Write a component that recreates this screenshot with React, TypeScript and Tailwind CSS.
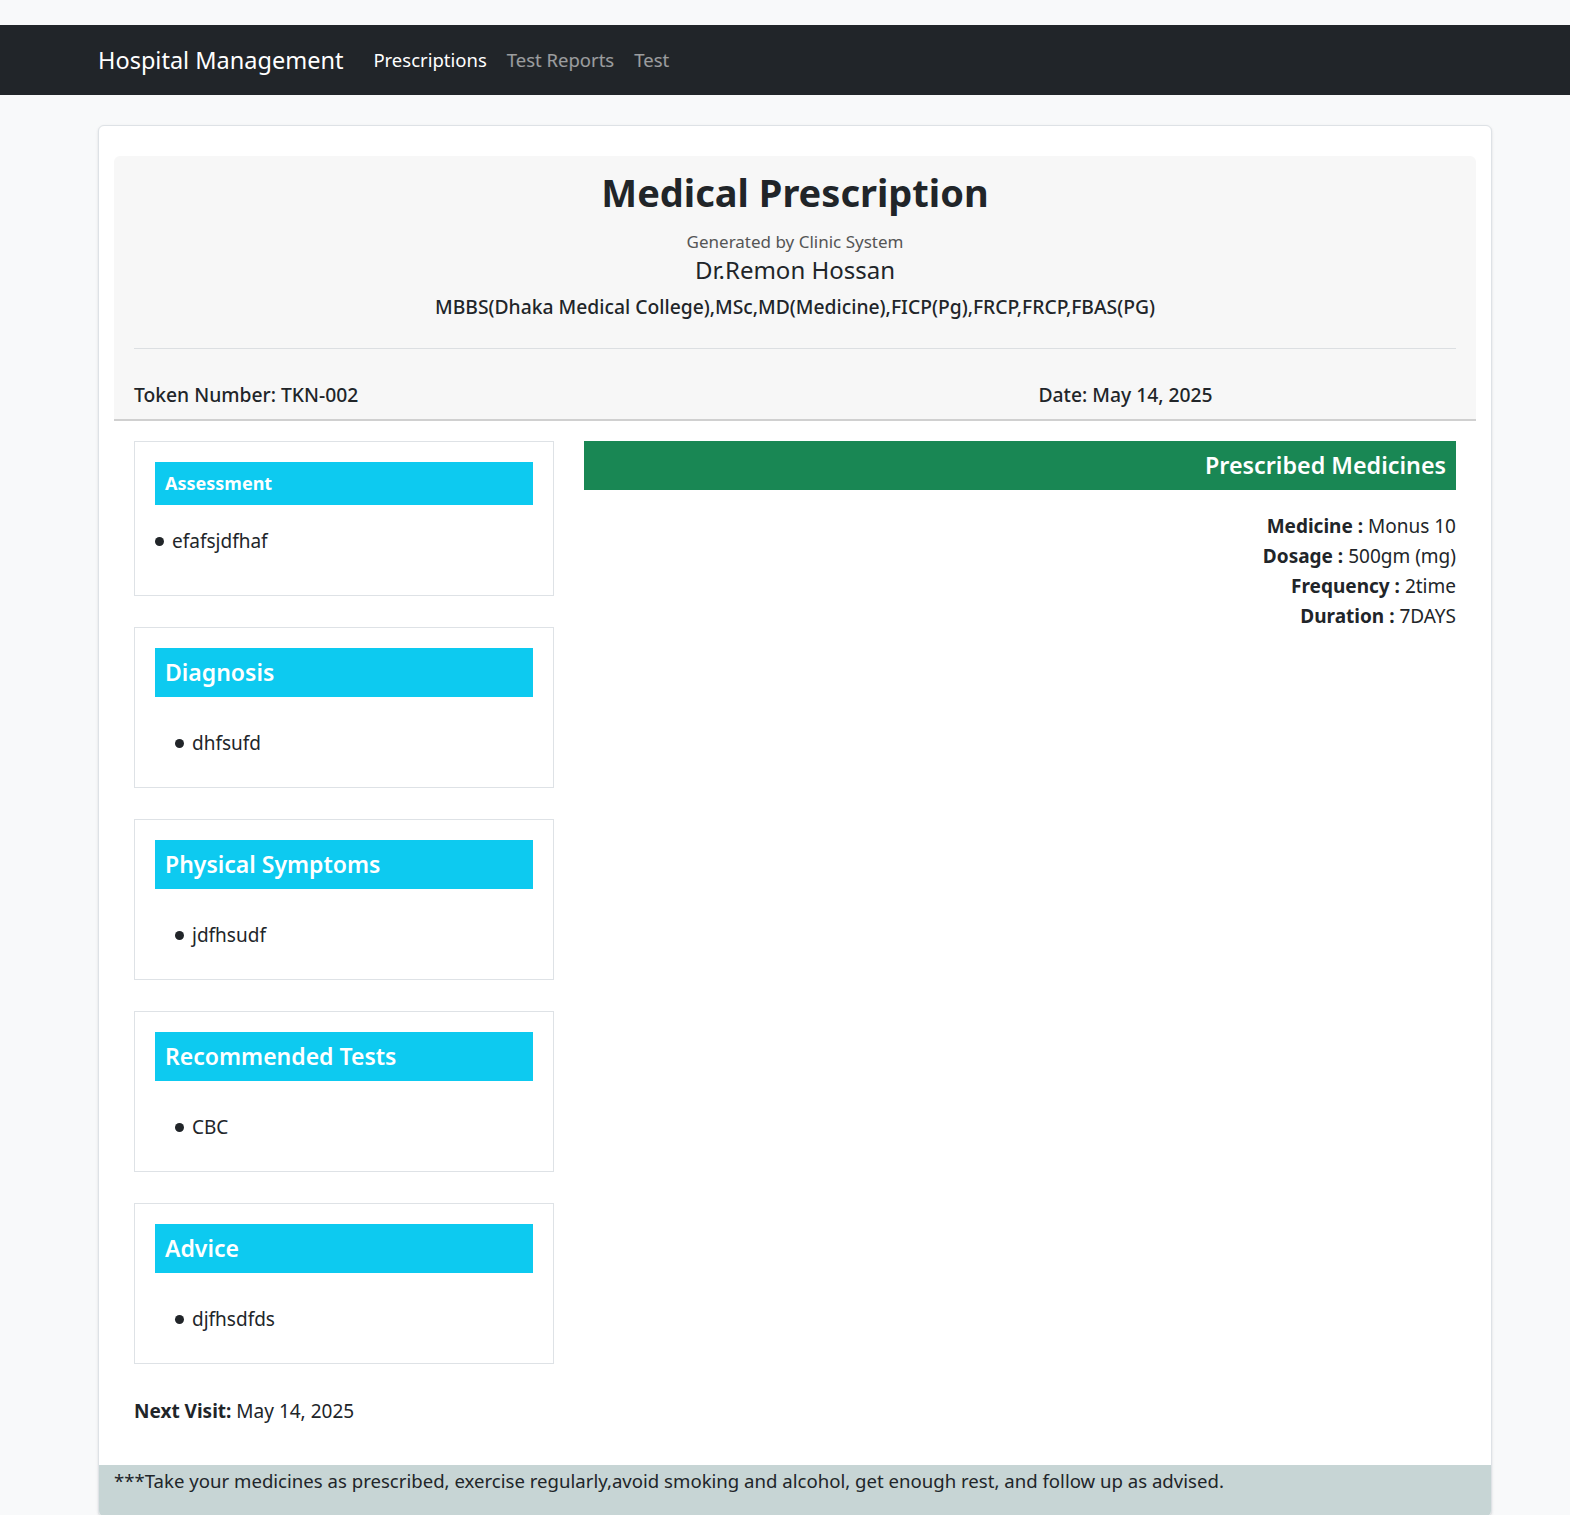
const sections = [
  { title: 'Assessment', items: ['efafsjdfhaf'], small: true },
  { title: 'Diagnosis', items: ['dhfsufd'] },
  { title: 'Physical Symptoms', items: ['jdfhsudf'] },
  { title: 'Recommended Tests', items: ['CBC'] },
  { title: 'Advice', items: ['djfhsdfds'] },
]

const medicines = [
  { label: 'Medicine', value: 'Monus 10' },
  { label: 'Dosage', value: '500gm (mg)' },
  { label: 'Frequency', value: '2time' },
  { label: 'Duration', value: '7DAYS' },
]

function Bullet({ text }: { text: string }) {
  return (
    <div className="flex items-center h-[30px] text-[19px]">
      <span className="inline-block w-[9px] h-[9px] rounded-full bg-[#212529] mr-[8px]" />
      <span>{text}</span>
    </div>
  )
}

function SectionBox({
  title,
  items,
  small,
}: {
  title: string
  items: string[]
  small?: boolean
}) {
  if (small) {
    return (
      <div className="border border-[#dee2e6] p-[20px] pb-[39px]">
        <div className="h-[43px] bg-[#0dcaf0] text-white font-bold text-[18px] leading-[43px] pl-[10px]">
          {title}
        </div>
        <div className="mt-[21px]">
          {items.map((item) => (
            <Bullet key={item} text={item} />
          ))}
        </div>
      </div>
    )
  }
  return (
    <div className="border border-[#dee2e6] p-[20px] pb-[29px]">
      <div className="h-[49px] bg-[#0dcaf0] text-white font-semibold text-[23px] leading-[49px] pl-[10px]">
        {title}
      </div>
      <div className="mt-[31px] pl-[20px]">
        {items.map((item) => (
          <Bullet key={item} text={item} />
        ))}
      </div>
    </div>
  )
}

export default function App() {
  return (
    <div className="min-h-screen bg-[#f8f9fa] pt-[25px] text-[#212529] font-['Noto_Sans',sans-serif]">
      <nav className="h-[70px] bg-[#212529] flex items-center pl-[98px]">
        <span className="text-white text-[23.5px] mr-[20px] pt-[2px]">Hospital Management</span>
        <a className="text-white text-[18.5px] px-[10px]">Prescriptions</a>
        <a className="text-white/55 text-[18.5px] px-[10px]">Test Reports</a>
        <a className="text-white/55 text-[18.5px] px-[10px]">Test</a>
      </nav>

      <div className="ml-[98px] w-[1394px] mt-[30px] bg-white border border-[#dee2e6] rounded-[6px] shadow-sm overflow-hidden">
        <div className="pt-[30px] px-[15px]">
          <div className="bg-[#f7f7f7] rounded-t-[6px] border-b-2 border-[#d0d0d0] px-[20px] pt-[12px] pb-[9px]">
            <div className="text-center">
              <h2 className="text-[38px] leading-[48px] font-bold">Medical Prescription</h2>
              <p className="mt-[13px] text-[17px] leading-[26px] text-[#555]">Generated by Clinic System</p>
              <h5 className="text-[24px] leading-[30px]">Dr.Remon Hossan</h5>
              <p className="mt-[7px] text-[19.3px] leading-[30px] font-medium">
                MBBS(Dhaka Medical College),MSc,MD(Medicine),FICP(Pg),FRCP,FRCP,FBAS(PG)
              </p>
            </div>
            <hr className="mt-[26px] border-[#dcdfe2]" />
            <div className="grid grid-cols-2 mt-[31px] text-[19.3px] leading-[30px] font-medium">
              <div>Token Number: TKN-002</div>
              <div className="text-center">Date: May 14, 2025</div>
            </div>
          </div>

          <div className="px-[20px] pt-[20px]">
            <div className="flex gap-[30px]">
              <div className="w-[420px] flex flex-col gap-[31px] shrink-0">
                {sections.map((s) => (
                  <SectionBox key={s.title} title={s.title} items={s.items} small={s.small} />
                ))}
              </div>
              <div className="flex-1">
                <div className="h-[49px] bg-[#198754] text-white font-semibold text-[23.3px] leading-[49px] text-right pr-[10px]">
                  Prescribed Medicines
                </div>
                <div className="mt-[21px] text-right text-[19px] leading-[30px]">
                  {medicines.map((m) => (
                    <div key={m.label}>
                      <span className="font-bold">{m.label} :</span> {m.value}
                    </div>
                  ))}
                </div>
              </div>
            </div>
            <div className="mt-[32px] text-[19px] leading-[30px]">
              <span className="font-bold">Next Visit:</span> May 14, 2025
            </div>
          </div>
        </div>
        <div className="mt-[39px] bg-[#c7d5d5] px-[15px] pt-[1px] pb-[20px] text-[18.6px] leading-[30px]">
          ***Take your medicines as prescribed, exercise regularly,avoid smoking and alcohol, get enough rest, and follow up as advised.
        </div>
      </div>
    </div>
  )
}
